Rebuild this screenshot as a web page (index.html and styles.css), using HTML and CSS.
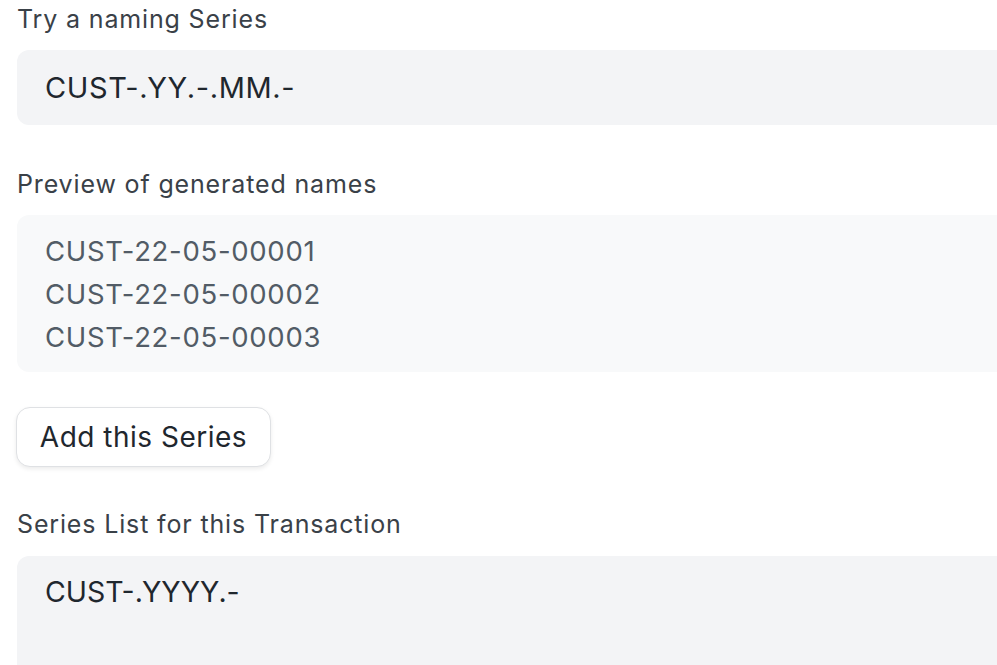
FILE: index.html
```html
<!DOCTYPE html>
<html>
<head>
<meta charset="utf-8">
<link rel="stylesheet" href="styles.css">
</head>
<body>
<div class="form">
  <div class="field">
    <div class="label">Try a naming Series</div>
    <div class="input">CUST-.YY.-.MM.-</div>
  </div>
  <div class="field">
    <div class="label">Preview of generated names</div>
    <div class="preview">
      <div>CUST-22-05-00001</div>
      <div>CUST-22-05-00002</div>
      <div>CUST-22-05-00003</div>
    </div>
  </div>
  <div class="actions">
    <button class="btn">Add this Series</button>
  </div>
  <div class="field">
    <div class="label">Series List for this Transaction</div>
    <div class="textarea">CUST-.YYYY.-</div>
  </div>
</div>
</body>
</html>
```

FILE: styles.css
```css
html, body {
  margin: 0;
  padding: 0;
  background: #ffffff;
  overflow: hidden;
}
body {
  font-family: Inter, "Noto Sans", sans-serif;
  width: 997px;
  height: 665px;
}
.form {
  display: flex;
  flex-direction: column;
  padding: 4px 0 0 17px;
  width: 1100px;
}
.field {
  display: flex;
  flex-direction: column;
}
.label {
  font-size: 25px;
  line-height: 30px;
  letter-spacing: 0.85px;
  color: #3a4148;
}
.input {
  margin-top: 16px;
  height: 75px;
  background: #f3f4f6;
  border-radius: 12px;
  font-size: 29px;
  letter-spacing: 0.6px;
  color: #1f272e;
  display: flex;
  align-items: center;
  padding-left: 28px;
  margin-bottom: 44px;
}
.preview {
  margin-top: 16px;
  height: 157px;
  background: #f8f9fa;
  border-radius: 12px;
  font-size: 27.5px;
  letter-spacing: 0.7px;
  line-height: 43px;
  color: #525c66;
  padding: 15px 0 0 28px;
  box-sizing: border-box;
}
.actions {
  margin-top: 35px;
  margin-left: -1px;
}
.btn {
  font-family: inherit;
  font-size: 28px;
  letter-spacing: 0.5px;
  color: #1f272e;
  background: #ffffff;
  border: 1px solid #dfe1e4;
  border-radius: 14px;
  height: 60px;
  width: 255px;
  padding: 0;
  box-shadow: 0 2px 4px rgba(0,0,0,0.08);
}
.actions + .field {
  margin-top: 42px;
}
.textarea {
  margin-top: 17px;
  height: 200px;
  background: #f3f4f6;
  border-radius: 12px;
  font-size: 28.5px;
  letter-spacing: 0;
  line-height: 36px;
  color: #1f272e;
  padding: 18px 0 0 28px;
  box-sizing: border-box;
}
```
